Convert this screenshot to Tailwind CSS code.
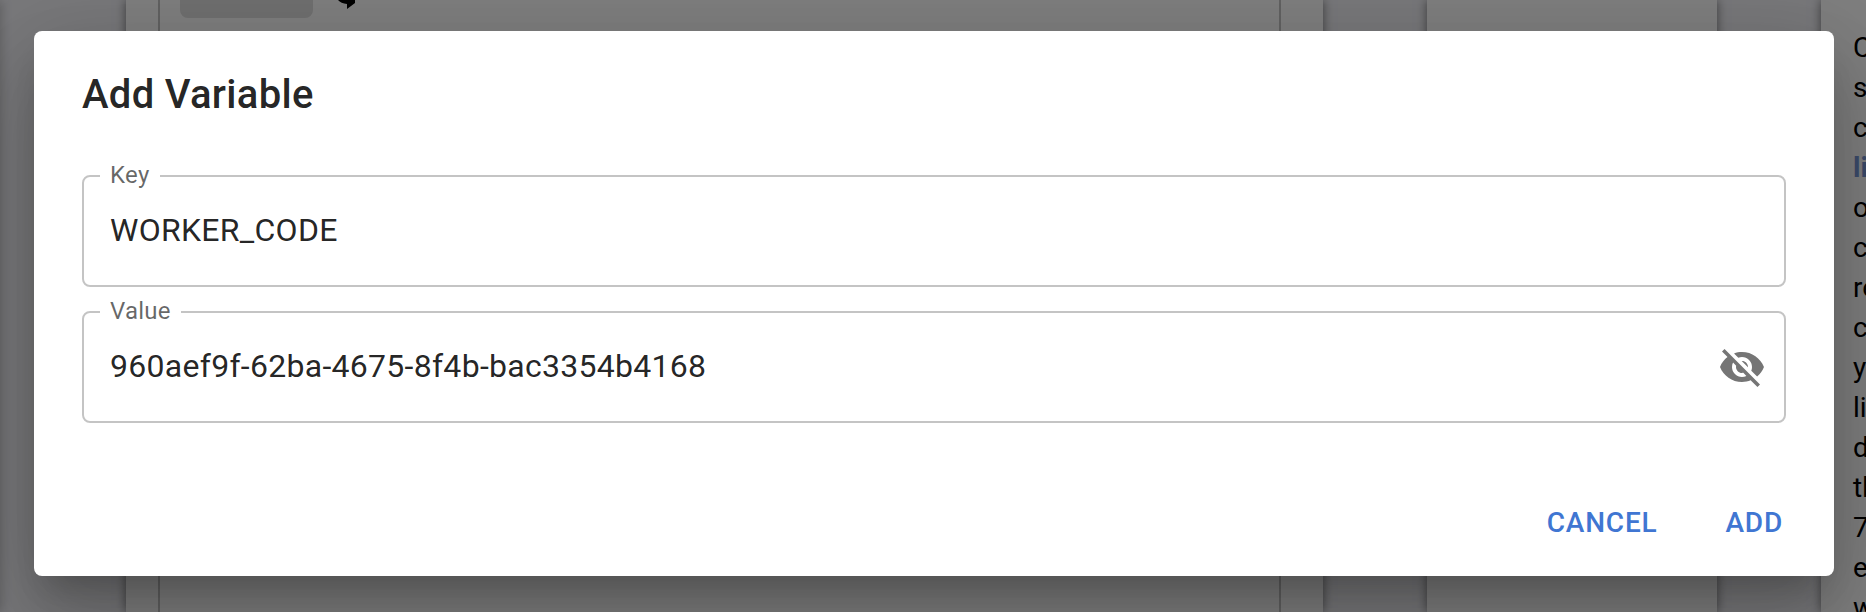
<!DOCTYPE html>
<html lang="en">
<head>
<meta charset="utf-8">
<title>Add Variable</title>
<script src="https://cdn.jsdelivr.net/npm/@tailwindcss/browser@4"></script>
</head>
<body class="relative h-[612px] w-[1866px] overflow-hidden bg-[#f2f2f7] font-[Roboto,sans-serif]">
  <!-- Page behind the dialog -->
  <div class="flex h-[612px] w-[1866px] overflow-hidden">
    <div class="-ml-2 mr-[126px] w-2 shrink-0 shadow-[0_0_12px_rgba(0,0,0,0.3)]"></div>
    <main class="w-[1197px] shrink-0 bg-white pl-8 pr-[42px] shadow-[0_0_10px_rgba(0,0,0,0.5)]">
      <div class="h-full border-x-2 border-[#c4c4c4] pl-5">
        <div class="flex">
          <div class="h-[18px] w-[133px] rounded-b-lg bg-[#e0e0e0]"></div>
          <svg class="ml-6 h-[9px] w-5" viewBox="0 0 20 9"><path d="M1 0H18V3L10 9V4Q4 3.500 1 0Z" fill="#000"/></svg>
        </div>
      </div>
    </main>
    <div class="ml-[104px] w-[290px] shrink-0 bg-white shadow-[0_0_10px_rgba(0,0,0,0.5)]"></div>
    <aside class="ml-[104px] w-[45px] shrink-0 bg-white pl-8 pt-7 text-[28px] leading-10 text-black shadow-[0_0_10px_rgba(0,0,0,0.5)]">
      <p>C</p><p>s</p><p>c</p><p class="font-bold text-[#7897d4]">li</p><p>o</p><p>c</p><p>re</p><p>c</p><p>y</p><p>li</p><p>d</p><p>th</p><p>7</p><p>e</p><p>w</p>
    </aside>
  </div>

  <!-- Backdrop and dialog -->
  <div class="absolute inset-0 bg-black/50 pl-[34px] pt-[31px]">
    <div role="dialog" class="flex h-[545px] w-[1800px] flex-col rounded-lg bg-white px-12 text-black/87 shadow-[0_22px_30px_-14px_rgba(0,0,0,0.2),0_48px_76px_6px_rgba(0,0,0,0.14),0_18px_92px_16px_rgba(0,0,0,0.12)]">
      <h2 class="mt-8 text-[40px] font-medium leading-[64px] tracking-[0.3px]">Add Variable</h2>
      <fieldset class="mt-[38px] h-[122px] rounded-lg border-2 border-black/23 px-4">
        <legend class="h-[22px] px-2.5 text-2xl leading-5 tracking-[0.3px] text-black/60">Key</legend>
        <div class="flex h-[86px] items-center pl-2.5 text-[32px] tracking-[0.28px]">WORKER_CODE</div>
      </fieldset>
      <fieldset class="mt-3.5 h-[122px] rounded-lg border-2 border-black/23 px-4">
        <legend class="h-[22px] px-2.5 text-2xl leading-5 tracking-[0.225px] text-black/60">Value</legend>
        <div class="flex h-[86px] items-center justify-between pl-2.5 pr-0.5 text-[32px] tracking-[0.28px]">
          <span>960aef9f-62ba-4675-8f4b-bac3354b4168</span>
          <svg class="mt-0.5 size-12" viewBox="0 0 24 24" fill="#757575"><path d="M12 7c2.760 0 5 2.240 5 5 0 .65-.13 1.260-.36 1.830l2.920 2.920c1.510-1.260 2.700-2.890 3.430-4.750-1.730-4.390-6-7.500-11-7.500-1.400 0-2.740.25-3.980.7l2.160 2.160C10.740 7.130 11.350 7 12 7zM2 4.270l2.280 2.280.46.46C3.080 8.300 1.780 10.020 1 12c1.730 4.390 6 7.500 11 7.500 1.550 0 3.030-.3 4.380-.84l.42.42L19.730 22 21 20.730 3.270 3 2 4.270zM7.530 9.800l1.550 1.550c-.05.21-.08.43-.08.65 0 1.660 1.340 3 3 3 .22 0 .44-.03.65-.08l1.550 1.550c-.67.33-1.410.53-2.200.53-2.760 0-5-2.240-5-5 0-.79.2-1.530.53-2.200zm4.310-.78l3.150 3.150.02-.16c0-1.660-1.340-3-3-3l-.17.01z"/></svg>
        </div>
      </fieldset>
      <div class="mt-[76px] flex justify-end gap-[68px] pr-[3px] text-[28px] font-medium leading-[48px] tracking-[0.8px] text-[#4076d2]">
        <button>CANCEL</button>
        <button>ADD</button>
      </div>
    </div>
  </div>
</body>
</html>
